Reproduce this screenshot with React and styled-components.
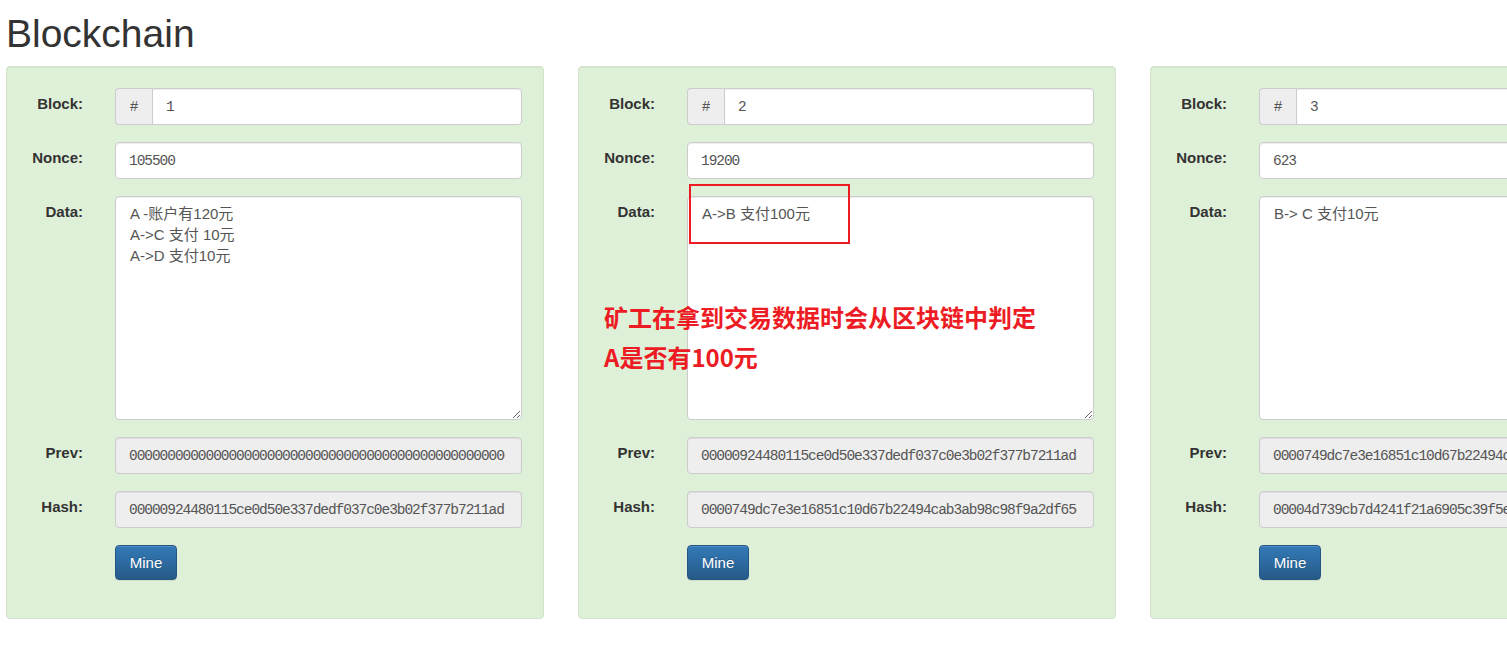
import React from 'react';
import styled, { createGlobalStyle } from 'styled-components';

const GlobalStyle = createGlobalStyle`
    html, body {
        margin: 0;
        padding: 0;
        background: #fff;
        overflow: hidden;
    }
    body {
        font-family: "Liberation Sans", Arial, "Noto Sans CJK SC", sans-serif;
        color: #333;
    }
`;

const Page = styled.div`
    padding-left: 6px;
    width: 1507px;
    height: 648px;
    overflow: hidden;
    box-sizing: border-box;
`;

const Title = styled.h1`
    margin: 12px 0 10px 0;
    font-size: 39px;
    line-height: 44px;
    font-weight: 400;
    color: #333;
`;

const Chain = styled.div`
    display: flex;
    gap: 34px;
`;

const Card = styled.div`
    position: relative;
    flex: 0 0 538px;
    box-sizing: border-box;
    background: #dff0d8;
    border: 1px solid #d3e3cc;
    border-radius: 4px;
    box-shadow: inset 0 1px 1px rgba(0, 0, 0, 0.05);
    padding: 21px 21px 38px 0;
    display: grid;
    grid-template-columns: 76px 1fr;
    column-gap: 32px;
    row-gap: 17px;
`;

const Label = styled.label`
    text-align: right;
    font-weight: 700;
    font-size: 15px;
    line-height: 20px;
    padding-top: 6px;
    color: #333;
`;

const fieldBase = `
    box-sizing: border-box;
    border: 1px solid #ccc;
    border-radius: 4px;
    box-shadow: inset 0 1px 1px rgba(0, 0, 0, 0.075);
    color: #555;
    outline: none;
    margin: 0;
`;

const Input = styled.input`
    ${fieldBase}
    width: 100%;
    height: 37px;
    padding: 0 16px 0 13px;
    font-family: "Liberation Mono", "Courier New", monospace;
    font-size: 14.5px;
    letter-spacing: -1.05px;
    background: ${p => (p.readOnly ? '#eee' : '#fff')};
`;

const Group = styled.div`
    display: flex;
    height: 37px;
`;

const Addon = styled.span`
    box-sizing: border-box;
    flex: 0 0 37px;
    display: flex;
    align-items: center;
    justify-content: center;
    background: #eee;
    border: 1px solid #ccc;
    border-right: 0;
    border-radius: 4px 0 0 4px;
    color: #555;
    font-family: "Liberation Mono", "Courier New", monospace;
    font-size: 14.5px;
`;

const GroupInput = styled(Input)`
    border-radius: 0 4px 4px 0;
    flex: 1;
`;

const TextArea = styled.textarea`
    ${fieldBase}
    width: 100%;
    height: 224px;
    padding: 6px 13px 6px 14px;
    resize: vertical;
    font-family: "Liberation Sans", Arial, "Noto Sans CJK SC", sans-serif;
    font-size: 15px;
    line-height: 21px;
    background: #fff;
    display: block;
`;

const MineButton = styled.button`
    grid-column: 2;
    justify-self: start;
    width: 62px;
    height: 35px;
    box-sizing: border-box;
    border: 1px solid #245580;
    border-radius: 4px;
    background-image: linear-gradient(to bottom, #337ab7 0, #265a88 100%);
    color: #fff;
    text-shadow: 0 -1px 0 rgba(0, 0, 0, 0.2);
    box-shadow: inset 0 1px 0 rgba(255, 255, 255, 0.15), 0 1px 1px rgba(0, 0, 0, 0.075);
    font-family: "Liberation Sans", Arial, sans-serif;
    font-size: 15px;
    padding: 0;
`;

const RedBox = styled.div`
    position: absolute;
    left: 110px;
    top: 117px;
    width: 161px;
    height: 60px;
    box-sizing: border-box;
    border: 2px solid #ed1c24;
    pointer-events: none;
`;

const Note = styled.div`
    position: absolute;
    left: 25px;
    top: 230px;
    color: #ed1c24;
    font-family: "Noto Sans CJK SC", sans-serif;
    font-weight: 700;
    font-size: 24px;
    line-height: 40px;
    white-space: nowrap;
    pointer-events: none;
`;

const blocks = [
    {
        n: '1',
        nonce: '105500',
        data: 'A -账户有120元\nA->C 支付 10元\nA->D 支付10元',
        prev: '0000000000000000000000000000000000000000000000000000000000000000',
        hash: '00000924480115ce0d50e337dedf037c0e3b02f377b7211ad3c6e8a5f41b92',
    },
    {
        n: '2',
        nonce: '19200',
        data: 'A->B 支付100元',
        prev: '00000924480115ce0d50e337dedf037c0e3b02f377b7211ad3c6e8a5f41b92',
        hash: '0000749dc7e3e16851c10d67b22494cab3ab98c98f9a2df65e1b07d4c3a8f2',
        note: true,
    },
    {
        n: '3',
        nonce: '623',
        data: 'B-> C 支付10元',
        prev: '0000749dc7e3e16851c10d67b22494cab3ab98c98f9a2df65e1b07d4c3a8f2',
        hash: '00004d739cb7d4241f21a6905c39f5e2a7b81c0d96e4f3a25b7c8d1e0f6a49',
    },
];

const Block = ({ block }) => (
    <Card>
        <Label>Block:</Label>
        <Group>
            <Addon>#</Addon>
            <GroupInput defaultValue={block.n} />
        </Group>
        <Label>Nonce:</Label>
        <Input defaultValue={block.nonce} />
        <Label>Data:</Label>
        <TextArea defaultValue={block.data} />
        <Label>Prev:</Label>
        <Input readOnly value={block.prev} />
        <Label>Hash:</Label>
        <Input readOnly value={block.hash} />
        <MineButton>Mine</MineButton>
        {block.note && <RedBox />}
        {block.note &&
            <Note>
                矿工在拿到交易数据时会从区块链中判定<br />
                A是否有100元
            </Note>}
    </Card>
);

const App = () => (
    <Page>
        <GlobalStyle />
        <Title>Blockchain</Title>
        <Chain>
            {blocks.map(b => <Block key={b.n} block={b} />)}
        </Chain>
    </Page>
);

export default App;
